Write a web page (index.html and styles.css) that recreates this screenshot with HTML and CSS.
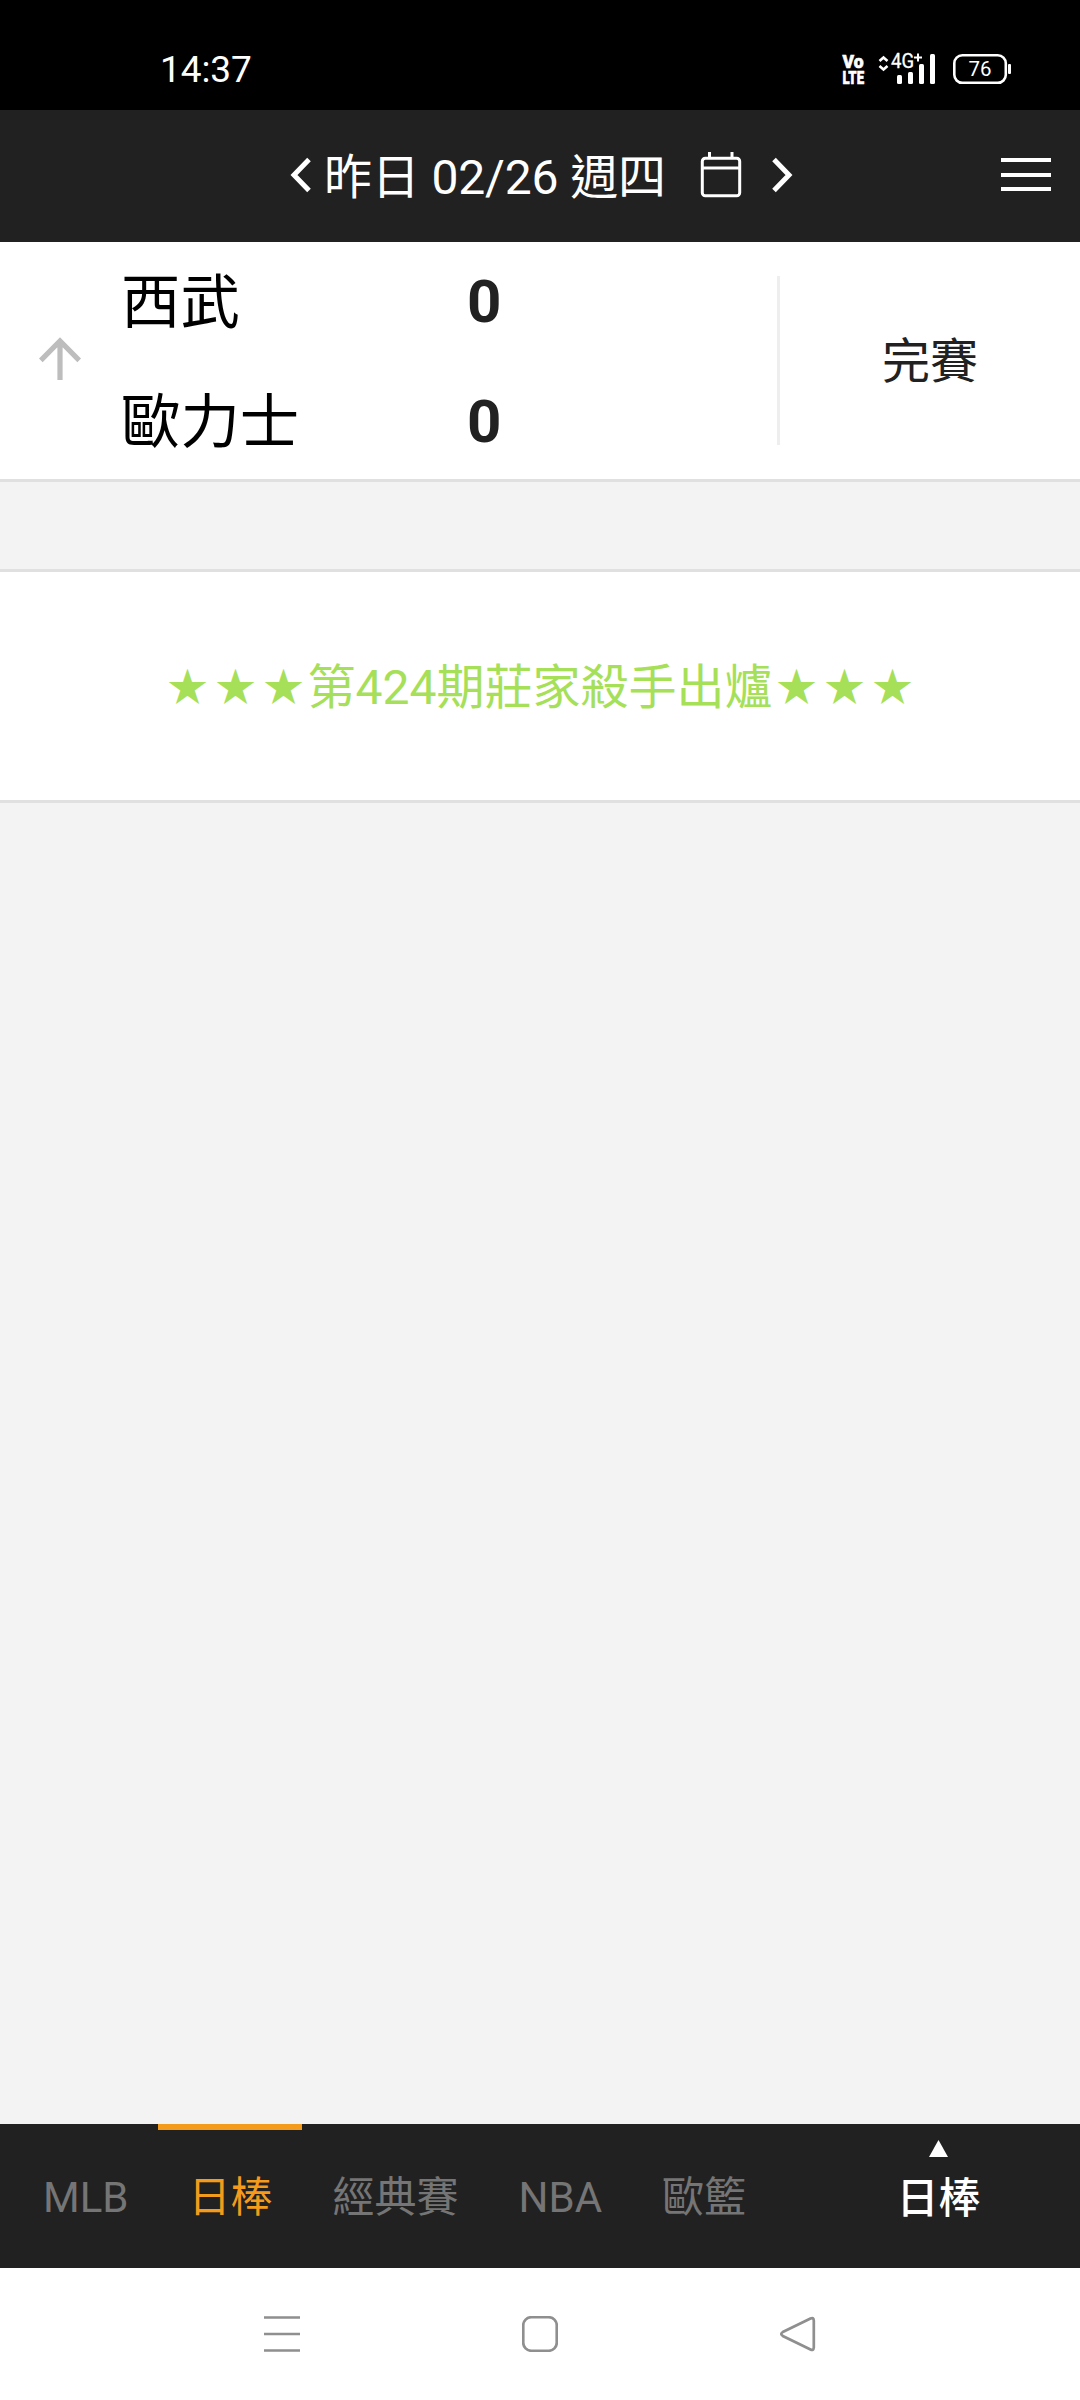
FILE: index.html
```html
<!DOCTYPE html>
<html lang="zh-Hant">
<head>
<meta charset="utf-8">
<title>日棒賽事</title>
<link rel="stylesheet" href="styles.css">
</head>
<body>
<div class="status-bar">
  <span class="clock">14:37</span>
  <svg class="status-icons" width="171" height="50" viewBox="841 43 171 50">
    <g fill="#fff" font-family="Roboto, sans-serif">
      <g stroke="#fff" stroke-width=".6">
        <text x="842.500" y="67.500" font-size="18" font-weight="900" textLength="21" lengthAdjust="spacingAndGlyphs">Vo</text>
        <text x="842.500" y="84" font-size="18.500" font-weight="900" textLength="21.500" lengthAdjust="spacingAndGlyphs">LTE</text>
      </g>
      <text x="891" y="68" font-size="19.500" textLength="23" lengthAdjust="spacingAndGlyphs" stroke="#fff" stroke-width=".3">4G</text>
      <rect x="897" y="75" width="5" height="9" rx="1.500"/>
      <rect x="908" y="72" width="5" height="12" rx="1.500"/>
      <rect x="919" y="64" width="5" height="20" rx="1.500"/>
      <rect x="930" y="54" width="5" height="30" rx="1.500"/>
      <rect x="1008" y="64" width="3" height="10" rx="1"/>
      <text x="968.500" y="76" font-size="21" textLength="23" lengthAdjust="spacingAndGlyphs">76</text>
    </g>
    <path d="M879.500 61l4-3.500 4 3.500M879.500 66l4 3.500 4-3.500" fill="none" stroke="#fff" stroke-width="2.600"/>
    <path d="M914 57.500h8M918 53.500v8" stroke="#fff" stroke-width="2"/>
    <rect x="954.300" y="55.300" width="51.500" height="27.500" rx="8" fill="none" stroke="#fff" stroke-width="2.600"/>
  </svg>
</div>

<header class="header">
  <svg class="chevron" width="22" height="36" viewBox="0 0 22 36"><path d="M19 2.500L4 18l15 15.500"/></svg>
  <span class="date">昨日 02/26 週四</span>
  <svg class="calendar" width="42" height="46" viewBox="0 0 42 46"><rect x="2.300" y="6.300" width="37.400" height="37.400" rx="3"/><path d="M2 16h38M9.500 0v7M32 0v7"/></svg>
  <svg class="chevron next" width="22" height="36" viewBox="0 0 22 36"><path d="M3 2.500L18 18 3 33.500"/></svg>
  <div class="menu"><i></i><i></i><i></i></div>
</header>

<main class="content">
  <section class="match">
    <svg class="arrow" width="42" height="43" viewBox="0 0 42 43"><path d="M21 43V5M1.800 23.300L21 4l19.200 19.300"/></svg>
    <div class="teams"><span>西武</span><span>歐力士</span></div>
    <div class="scores"><b>0</b><b>0</b></div>
    <div class="state"><span>完賽</span></div>
  </section>
  <section class="notice"><span class="stars">★★★</span><span>第424期莊家殺手出爐</span><span class="stars">★★★</span></section>
</main>

<nav class="tabs">
  <a class="tab">MLB</a>
  <a class="tab active">日棒</a>
  <a class="tab">經典賽</a>
  <a class="tab">NBA</a>
  <a class="tab">歐籃</a>
  <a class="current">
    <svg width="19" height="17" viewBox="0 0 21 17" preserveAspectRatio="none"><path d="M10.500 0L21 17H0z" fill="#fff"/></svg>
    <span>日棒</span>
  </a>
</nav>

<footer class="system-nav">
  <svg width="36" height="36" viewBox="0 0 36 36"><path d="M0 1.500h36M0 18h36M0 34.500h36"/></svg>
  <svg width="36" height="36" viewBox="0 0 36 36"><rect x="1.250" y="1.250" width="33.500" height="33.500" rx="8"/></svg>
  <svg width="36" height="36" viewBox="0 0 36 36"><path d="M30.500 2.500Q33.500 1 33.800 4.500V31.500Q33.500 35 30.500 33.500L2.800 20Q-.2 18 2.800 16Z"/></svg>
</footer>
</body>
</html>
```
FILE: styles.css
```css
* { box-sizing: border-box; }
body {
  margin: 0;
  width: 1080px;
  height: 2400px;
  display: flex;
  flex-direction: column;
  background: #f3f3f3;
  color: #212121;
  font-family: Roboto, "Noto Sans CJK TC", sans-serif;
  font-size: 48px;
}
svg { display: block; flex: none; }

.status-bar {
  height: 110px;
  background: #000;
  color: #fff;
  display: flex;
  justify-content: space-between;
  padding: 0 68px 0 160px;
}
.clock { font-size: 37px; line-height: 44px; margin-top: 48px; letter-spacing: -.1px; }
.status-icons { margin-top: 43px; }

.header {
  height: 132px;
  background: #212121;
  color: #fff;
  display: flex;
  align-items: center;
  padding: 0 29px 3px 290px;
}
.chevron { fill: none; stroke: #fff; stroke-width: 5; }
.date { margin-left: 12px; width: 342px; line-height: 60px; padding-top: 7px; white-space: nowrap; letter-spacing: -.15px; }
.calendar { margin-left: 34px; fill: none; stroke: #fff; stroke-width: 3; }
.next { margin-left: 29px; }
.menu { margin-left: auto; width: 50px; height: 33px; display: flex; flex-direction: column; justify-content: space-between; }
.menu i { height: 4px; background: #fff; }

.content { flex: 1; }
.match {
  height: 240px;
  background: #fff;
  border-bottom: 3px solid #e0e0e0;
  display: flex;
  align-items: center;
  padding-left: 39px;
}
.arrow { fill: none; stroke: #bdbdbd; stroke-width: 5.200; margin-bottom: 4px; }
.teams, .scores { display: flex; flex-direction: column; align-self: flex-start; font-size: 59.4px; line-height: 120px; }
.teams { width: 346px; margin-left: 40px; padding-top: 1px; color: #000; }
.scores { width: 310px; font-size: 60px; }
.state {
  flex: 1;
  height: 169px;
  border-left: 3px solid #eee;
  display: flex;
  align-items: center;
  justify-content: center;
  padding-bottom: 7px;
}
.notice {
  margin-top: 87px;
  height: 234px;
  background: #fff;
  border: solid #e0e0e0;
  border-width: 3px 0;
  color: #a5e058;
  display: flex;
  justify-content: center;
  line-height: 232px;
}
.stars { width: 144px; padding-left: 4px; font-size: 40px; letter-spacing: 8px; }

.tabs {
  height: 144px;
  background: #212121;
  color: #757575;
  font-size: 42px;
  line-height: 148px;
  display: flex;
  padding-left: 13px;
}
.tab { padding: 0 30px; }
.active { color: #f59b1c; border-top: 6px solid #f59b1c; line-height: 136px; }
.current {
  margin-left: auto;
  width: 283px;
  color: #fff;
  font-weight: 500;
  display: flex;
  flex-direction: column;
  align-items: center;
  padding-top: 16px;
}
.current span { line-height: 60px; margin-top: 12px; }

.system-nav {
  height: 132px;
  background: #fff;
  display: flex;
  justify-content: space-between;
  align-items: center;
  padding: 0 264px;
}
.system-nav svg { fill: none; stroke: #8f8f8f; stroke-width: 2.700; }
```
